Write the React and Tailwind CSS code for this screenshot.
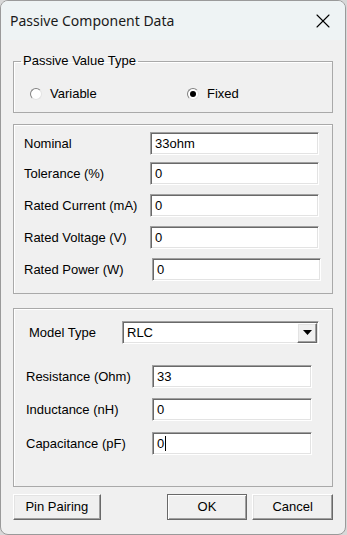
import { X } from "lucide-react";

const sunken =
  "border border-t-[#a0a0a0] border-l-[#a0a0a0] border-b-[#ffffff] border-r-[#ffffff] shadow-[inset_1px_1px_0_#696969,inset_-1px_-1px_0_#e3e3e3] bg-white";
const raised =
  "border border-t-[#ffffff] border-l-[#ffffff] border-b-[#696969] border-r-[#696969] shadow-[inset_-1px_-1px_0_#a0a0a0,inset_1px_1px_0_#e3e3e3] bg-[#f0f0f0]";

function Row({ label, value, labelW, inputW, className = "", caret = false }) {
  return (
    <div className={`flex items-center ${className}`}>
      <span className="shrink-0" style={{ width: labelW }}>
        {label}
      </span>
      <div
        className={`h-[23px] flex items-center pl-[4px] ${sunken}`}
        style={{ width: inputW }}
      >
        <span>{value}</span>
        {caret && <span className="ml-px h-[15px] w-px bg-black" />}
      </div>
    </div>
  );
}

function Radio({ checked, label }) {
  return (
    <div className="flex items-center gap-[8px]">
      <span className="flex h-[12px] w-[12px] items-center justify-center rounded-full border border-t-[#808080] border-l-[#808080] border-b-[#e3e3e3] border-r-[#e3e3e3] bg-white">
        {checked && <span className="h-[6px] w-[6px] rounded-full bg-black" />}
      </span>
      <span>{label}</span>
    </div>
  );
}

export default function App() {
  return (
    <div className="h-[535px] w-[347px] bg-[#d8d8d8]">
      <div className="flex h-[535px] w-[346px] flex-col overflow-hidden rounded-lg border border-[#9a9a9a] bg-[#f0f0f0] font-['Liberation_Sans',Arial,sans-serif] text-[13px] text-black">
        {/* Title bar */}
        <div className="flex h-[39px] shrink-0 items-center justify-between bg-[#eef3f4] pl-[9px] pr-[10px]">
          <span className="font-['Noto_Sans',sans-serif] text-[14px] text-[#1a1a1a]">
            Passive Component Data
          </span>
          <X className="h-[24px] w-[24px] text-black" strokeWidth={1.1} />
        </div>

        <div className="flex flex-col px-[12px]">
          {/* Passive Value Type */}
          <fieldset className="mt-[14px] h-[59px] border border-[#a9a9a9] shadow-[inset_1px_1px_0_#ffffff]">
            <legend className="ml-[7px] px-[2px] leading-[14px]">
              Passive Value Type
            </legend>
            <div className="mt-[16px] flex pl-[16px]">
              <div className="w-[157px]">
                <Radio label="Variable" />
              </div>
              <Radio checked label="Fixed" />
            </div>
          </fieldset>

          {/* Ratings */}
          <div className="mt-[11px] flex h-[170px] flex-col border border-[#a9a9a9] pl-[10px] pt-[7px] shadow-[inset_1px_1px_0_#ffffff]">
            <Row label="Nominal" value="33ohm" labelW={126} inputW={169} />
            <Row label="Tolerance (%)" value="0" labelW={126} inputW={169} className="mt-[7px]" />
            <Row label="Rated Current (mA)" value="0" labelW={126} inputW={169} className="mt-[9px]" />
            <Row label="Rated Voltage (V)" value="0" labelW={126} inputW={169} className="mt-[9px]" />
            <Row label="Rated Power (W)" value="0" labelW={128} inputW={169} className="mt-[9px]" />
          </div>

          {/* Model */}
          <div className="mt-[14px] flex h-[179px] flex-col border border-[#a9a9a9] pt-[12px] shadow-[inset_1px_1px_0_#ffffff]">
            <div className="flex items-center pl-[15px]">
              <span className="w-[93px] shrink-0">Model Type</span>
              <div className={`flex h-[23px] w-[197px] items-center justify-between pl-[4px] pr-[1px] ${sunken}`}>
                <span>RLC</span>
                <div className={`flex h-[20px] w-[20px] items-center justify-center ${raised}`}>
                  <svg width="9" height="5" viewBox="0 0 9 5">
                    <path d="M0 0h9L4.5 5z" fill="#000" />
                  </svg>
                </div>
              </div>
            </div>
            <div className="mt-[21px] flex flex-col pl-[12px]">
              <Row label="Resistance (Ohm)" value="33" labelW={126} inputW={160} />
              <Row label="Inductance (nH)" value="0" labelW={126} inputW={160} className="mt-[10px]" />
              <Row label="Capacitance (pF)" value="0" labelW={126} inputW={160} className="mt-[11px]" caret />
            </div>
          </div>

          {/* Buttons */}
          <div className="mt-[7px] flex items-center">
            <button className={`h-[26px] w-[88px] ${raised}`}>Pin Pairing</button>
            <button className="ml-[66px] h-[26px] w-[81px] border border-[#696969] bg-[#f0f0f0] shadow-[inset_1px_1px_0_#ffffff,inset_-1px_-1px_0_#a0a0a0]">
              OK
            </button>
            <button className={`ml-[5px] h-[26px] w-[81px] ${raised}`}>Cancel</button>
          </div>
        </div>
      </div>
    </div>
  );
}
